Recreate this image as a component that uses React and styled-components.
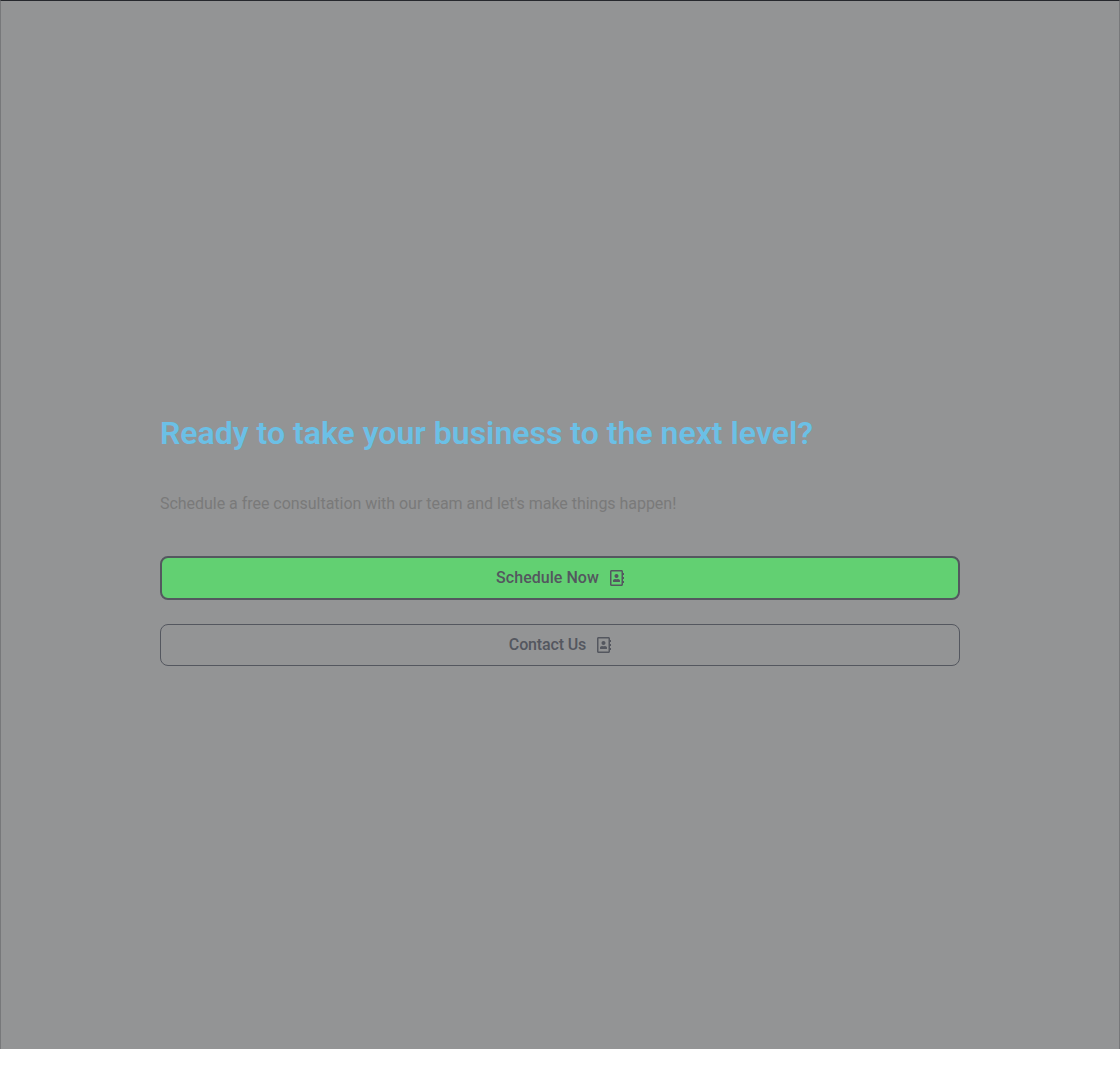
import React from "react";
import styled, { createGlobalStyle } from "styled-components";
import { FaRegAddressBook } from "react-icons/fa";

const Global = createGlobalStyle`
  *, *::before, *::after { box-sizing: border-box; }
  body { margin: 0; background: #fff; font-family: Roboto, sans-serif; }
`;

const Section = styled.section`
  height: 1049px;
  padding: 29px 159px 0;
  display: flex;
  flex-direction: column;
  justify-content: center;
  background: #939495;
  border: 1px solid #77787a;
  border-top-color: #26282d;
  border-bottom: 0;
`;

const Title = styled.h2`
  margin: 0 0 39px;
  font-size: 32px;
  line-height: 40px;
  font-weight: 600;
  color: #6bc0e6;
`;

const Copy = styled.p`
  margin: 0 0 40px;
  font-size: 16px;
  line-height: 24px;
  letter-spacing: -0.03px;
  color: #7a7a7a;
`;

const Actions = styled.div`
  display: flex;
  flex-direction: column;
  gap: 24px;
`;

const Button = styled.button`
  display: flex;
  align-items: center;
  justify-content: center;
  gap: 11px;
  height: ${(p) => (p.$primary ? 44 : 42)}px;
  padding: 0 16px;
  border: ${(p) => (p.$primary ? 2 : 1)}px solid #54575f;
  border-radius: 8px;
  background: ${(p) => (p.$primary ? "#62d072" : "transparent")};
  color: #54575f;
  font: 500 16px/24px Roboto, sans-serif;
  letter-spacing: ${(p) => (p.$primary ? 0.04 : -0.14)}px;
`;

const BookIcon = styled(FaRegAddressBook)`
  width: 14px;
  height: 16px;
`;

export default function App() {
  return (
    <>
      <Global />
      <Section>
        <Title>Ready to take your business to the next level?</Title>
        <Copy>Schedule a free consultation with our team and let's make things happen!</Copy>
        <Actions>
          <Button $primary>Schedule Now <BookIcon /></Button>
          <Button>Contact Us <BookIcon /></Button>
        </Actions>
      </Section>
    </>
  );
}
